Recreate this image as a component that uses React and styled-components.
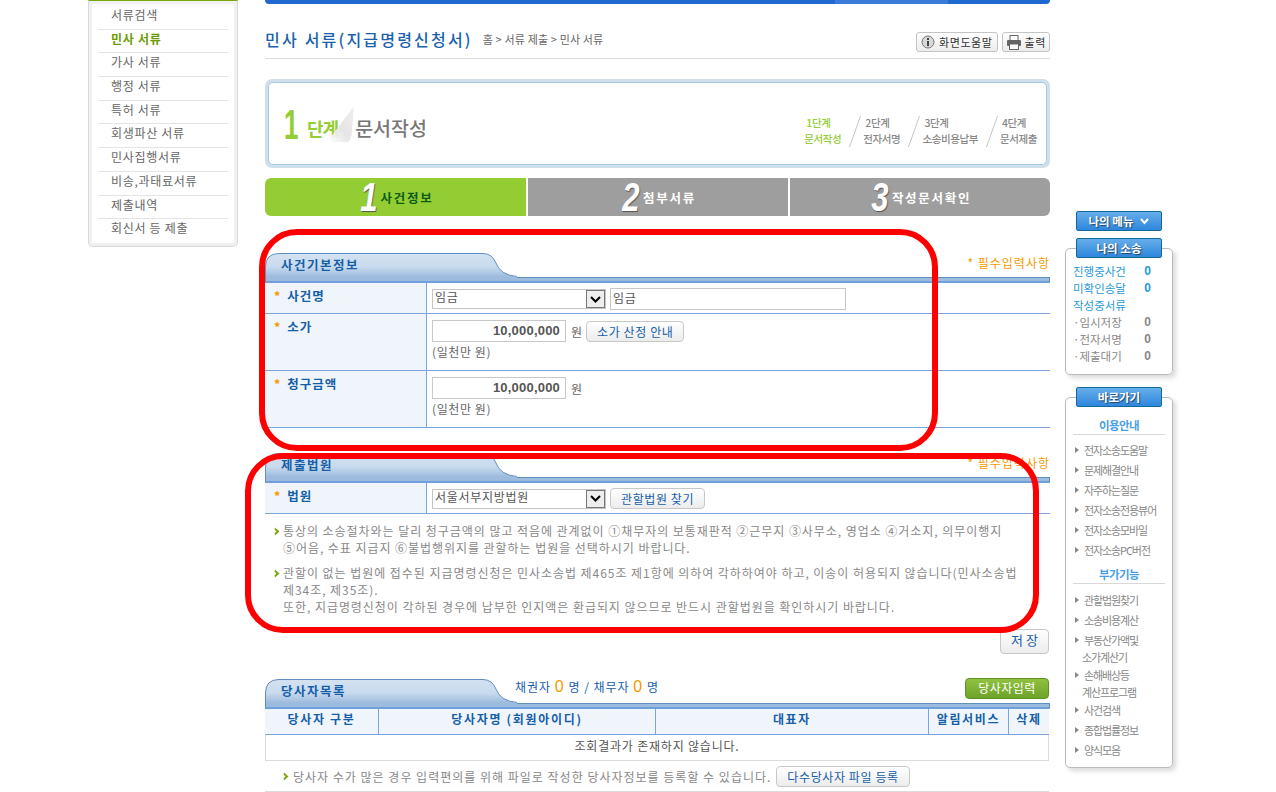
import styled, { createGlobalStyle } from "styled-components";

const GlobalStyle = createGlobalStyle`
  html, body {
    margin: 0;
    padding: 0;
    background: #fff;
    overflow: hidden;
  }
  body {
    font-family: "Noto Sans CJK KR", "Noto Sans", sans-serif;
    font-size: 12px;
    color: #666;
  }
  * { box-sizing: border-box; }
`;

const sideMenu = [
  "서류검색",
  "민사 서류",
  "가사 서류",
  "행정 서류",
  "특허 서류",
  "회생파산 서류",
  "민사집행서류",
  "비송,과태료서류",
  "제출내역",
  "회신서 등 제출",
];

const stepList = [
  ["1단계", "문서작성", true],
  ["2단계", "전자서명"],
  ["3단계", "소송비용납부"],
  ["4단계", "문서제출"],
];

const guideLinks = ["전자소송도움말", "문제해결안내", "자주하는질문", "전자소송전용뷰어", "전자소송모바일", "전자소송PC버전"];
const extraLinks = [
  ["관할법원찾기"],
  ["소송비용계산"],
  ["부동산가액및", "소가계산기"],
  ["손해배상등", "계산프로그램"],
  ["사건검색"],
  ["종합법률정보"],
  ["양식모음"],
];

const Arrow = () => (
  <ArrowIcon width="7" height="9" viewBox="0 0 7 9">
    <path d="M1 0.5 L5.5 4.5 L1 8.5 L0.5 6.5 L2.5 4.5 L0.5 2.5 Z" fill="#7fa60c" />
  </ArrowIcon>
);

const SelectChevron = () => (
  <SelectArrow>
    <svg width="11" height="7" viewBox="0 0 11 7">
      <path d="M1 1 L5.5 5.5 L10 1" fill="none" stroke="#000" strokeWidth="2" />
    </svg>
  </SelectArrow>
);

const SectionTab = ({ children }) => (
  <TabWrap>
    <TabShape width="252" height="25" viewBox="0 0 252 25">
      <defs>
        <linearGradient id="tabFill" x1="0" y1="0" x2="0" y2="1">
          <stop offset="0" stopColor="#d3e2f1" />
          <stop offset="0.55" stopColor="#c8daed" />
          <stop offset="0.95" stopColor="#9dbbdd" />
        </linearGradient>
      </defs>
      <path d="M0.5 25 V14 Q0.5 0.5 14 0.5 H218 Q227 0.5 231 10 Q235 22 252 23.5 V25 Z" fill="url(#tabFill)" />
      <path d="M0.5 25 V14 Q0.5 0.5 14 0.5 H218 Q227 0.5 231 10 Q235 22 252 23.5" fill="none" stroke="#5f8fbf" />
    </TabShape>
    <TabLabel>{children}</TabLabel>
  </TabWrap>
);

const App = () => {
  return (
    <Page>
      <GlobalStyle />
      <SideMenu>
        {sideMenu.map((item, i) => (
          <SideItem key={item} $active={i === 1}>
            {item}
          </SideItem>
        ))}
      </SideMenu>

      <Main>
        <TopBar />
        <TitleRow>
          <Title>민사 서류(지급명령신청서)</Title>
          <Crumbs>홈 &gt; 서류 제출 &gt; 민사 서류</Crumbs>
          <TitleTools>
            <ToolButton>
              <svg width="14" height="14" viewBox="0 0 14 14">
                <circle cx="7" cy="7" r="6" fill="#d8d8d8" stroke="#777" />
                <rect x="6" y="6" width="2" height="5" fill="#444" />
                <rect x="6" y="3" width="2" height="2" fill="#444" />
              </svg>
              화면도움말
            </ToolButton>
            <ToolButton $compact>
              <svg width="16" height="15" viewBox="0 0 16 15">
                <rect x="4" y="0.5" width="8" height="5" fill="#fff" stroke="#666" />
                <rect x="1" y="5" width="14" height="6" rx="1" fill="#666" />
                <rect x="3.5" y="9" width="9" height="5.5" fill="#fff" stroke="#666" />
              </svg>
              출력
            </ToolButton>
          </TitleTools>
        </TitleRow>

        <StepBox>
          <StepInner>
            <StepHead>
              <StepNum>1</StepNum>
              <StepWord>단계</StepWord>
              <FoldIcon width="27" height="36" viewBox="0 0 27 36">
                <defs>
                  <linearGradient id="fold" x1="0" y1="1" x2="1" y2="0">
                    <stop offset="0" stopColor="#fff" stopOpacity="0.9" />
                    <stop offset="0.45" stopColor="#e4e4e4" stopOpacity="0.95" />
                    <stop offset="1" stopColor="#efefef" />
                  </linearGradient>
                </defs>
                <path d="M27 0 L0 36 H20 Q24 36 25 25 Z" fill="url(#fold)" />
              </FoldIcon>
              <StepTitle>문서작성</StepTitle>
            </StepHead>
            <StepItems>
              {stepList.map(([a, b, on], i) => (
                <StepItem key={a}>
                  {i > 0 && (
                    <svg width="12" height="31" viewBox="0 0 12 31">
                      <line x1="11.5" y1="0" x2="0.5" y2="31" stroke="#c4c4c4" />
                    </svg>
                  )}
                  <StepText $on={on}>
                    <span>{a}</span>
                    <span>{b}</span>
                  </StepText>
                </StepItem>
              ))}
            </StepItems>
          </StepInner>
        </StepBox>

        <Tabs>
          <TabItem $active $first>
            <TabNum>1</TabNum>
            <TabText $dark>사건정보</TabText>
          </TabItem>
          <TabItem>
            <TabNum>2</TabNum>
            <TabText>첨부서류</TabText>
          </TabItem>
          <TabItem $last>
            <TabNum>3</TabNum>
            <TabText>작성문서확인</TabText>
          </TabItem>
        </Tabs>

        <SectionHead $top={37}>
          <SectionTop>
            <SectionTab>사건기본정보</SectionTab>
            <Required>* 필수입력사항</Required>
          </SectionTop>
          <HeadBar />
        </SectionHead>
        <FormRow $height={31}>
          <RowLabel><Star>*</Star>사건명</RowLabel>
          <RowBody $pad={5}>
            <InlineRow>
              <SelectBox $width={174}>
                임금
                <SelectChevron />
              </SelectBox>
              <TextField $width={236} readOnly value="임금" />
            </InlineRow>
          </RowBody>
        </FormRow>
        <FormRow $height={57}>
          <RowLabel><Star>*</Star>소가</RowLabel>
          <RowBody $pad={6}>
            <InlineRow>
              <AmountField readOnly value="10,000,000" />
              <Unit>원</Unit>
              <SmallButton>소가 산정 안내</SmallButton>
            </InlineRow>
            <Hint>(일천만 원)</Hint>
          </RowBody>
        </FormRow>
        <FormRow $height={57}>
          <RowLabel><Star>*</Star>청구금액</RowLabel>
          <RowBody $pad={6}>
            <InlineRow>
              <AmountField readOnly value="10,000,000" />
              <Unit>원</Unit>
            </InlineRow>
            <Hint>(일천만 원)</Hint>
          </RowBody>
        </FormRow>

        <SectionHead $top={25}>
          <SectionTop>
            <SectionTab>제출법원</SectionTab>
            <Required>* 필수입력사항</Required>
          </SectionTop>
          <HeadBar />
        </SectionHead>
        <FormRow $height={31}>
          <RowLabel><Star>*</Star>법원</RowLabel>
          <RowBody $pad={5}>
            <InlineRow>
              <SelectBox $width={174}>
                서울서부지방법원
                <SelectChevron />
              </SelectBox>
              <SmallButton>관할법원 찾기</SmallButton>
            </InlineRow>
          </RowBody>
        </FormRow>
        <Notes>
          <Note>
            <Arrow />
            <p>
              통상의 소송절차와는 달리 청구금액의 많고 적음에 관계없이 ①채무자의 보통재판적 ②근무지 ③사무소, 영업소 ④거소지, 의무이행지
              <br />
              ⑤어음, 수표 지급지 ⑥불법행위지를 관할하는 법원을 선택하시기 바랍니다.
            </p>
          </Note>
          <Note>
            <Arrow />
            <p>
              관할이 없는 법원에 접수된 지급명령신청은 민사소송법 제465조 제1항에 의하여 각하하여야 하고, 이송이 허용되지 않습니다(민사소송법
              <br />
              제34조, 제35조).
              <br />
              또한, 지급명령신청이 각하된 경우에 납부한 인지액은 환급되지 않으므로 반드시 관할법원을 확인하시기 바랍니다.
            </p>
          </Note>
        </Notes>
        <SaveRow>
          <SaveButton>저 장</SaveButton>
        </SaveRow>

        <SectionHead $top={25}>
          <SectionTop>
            <SectionTab>당사자목록</SectionTab>
            <PartyCount>
              채권자 <b>0</b> 명 / 채무자 <b>0</b> 명
            </PartyCount>
            <GreenButton>당사자입력</GreenButton>
          </SectionTop>
          <HeadBar />
        </SectionHead>
        <PartyHead>
          <span>당사자 구분</span>
          <span>당사자명 (회원아이디)</span>
          <span>대표자</span>
          <span>알림서비스</span>
          <span>삭제</span>
        </PartyHead>
        <EmptyRow>조회결과가 존재하지 않습니다.</EmptyRow>
        <BulkRow>
          <Arrow />
          <span>당사자 수가 많은 경우 입력편의를 위해 파일로 작성한 당사자정보를 등록할 수 있습니다.</span>
          <SmallButton>다수당사자 파일 등록</SmallButton>
        </BulkRow>

        <Ring $left={-6} $top={229} $width={679} $height={222} />
        <Ring $left={-20} $top={453} $width={794} $height={180} />
      </Main>

      <RightRail>
        <RailButton>
          나의 메뉴
          <svg width="9" height="7" viewBox="0 0 9 7">
            <path d="M1 1 L4.5 5 L8 1" fill="none" stroke="#fff" strokeWidth="2" />
          </svg>
        </RailButton>
        <RailBox $top={17}>
          <RailCap>나의 소송</RailCap>
          <CaseList>
            <CaseRow $blue><span>진행중사건</span><b>0</b></CaseRow>
            <CaseRow $blue><span>미확인송달</span><b>0</b></CaseRow>
            <CaseRow $blue><span>작성중서류</span></CaseRow>
            <CaseRow><span>·임시저장</span><b>0</b></CaseRow>
            <CaseRow><span>·전자서명</span><b>0</b></CaseRow>
            <CaseRow><span>·제출대기</span><b>0</b></CaseRow>
          </CaseList>
        </RailBox>
        <RailBox $top={22}>
          <RailCap>바로가기</RailCap>
          <RailHeading $top={8} $below={5}>이용안내</RailHeading>
          {guideLinks.map((l) => (
            <RailLink key={l}>{l}</RailLink>
          ))}
          <RailHeading $top={4} $below={6}>부가기능</RailHeading>
          {extraLinks.map((l) => (
            <RailLink key={l[0]} $double={l.length > 1}>
              {l[0]}
              {l[1] && <RailLinkSecond>{l[1]}</RailLinkSecond>}
            </RailLink>
          ))}
        </RailBox>
      </RightRail>
    </Page>
  );
};

const Page = styled.div`
  display: flex;
  align-items: flex-start;
  width: 1276px;
  height: 792px;
  padding-left: 88px;
  overflow: hidden;
`;

const SideMenu = styled.div`
  width: 150px;
  height: 247px;
  flex: none;
  padding: 5px 9px 5px;
  border: 1px solid #d8d8d8;
  border-top: 1px solid #7aa80c;
  border-radius: 0 0 5px 5px;
  box-shadow: inset 0 0 0 3px #f0f0f0;
`;

const SideItem = styled.div`
  height: 23.7px;
  line-height: 18px;
  padding-left: 13px;
  border-bottom: 1px solid #e4e4e4;
  color: ${(p) => (p.$active ? "#6a9c00" : "#666")};
  font-weight: ${(p) => (p.$active ? 700 : 400)};
  letter-spacing: 0.7px;

  &:last-child {
    border-bottom: none;
  }
`;

const Main = styled.div`
  position: relative;
  width: 785px;
  flex: none;
  margin-left: 27px;
`;

const TopBar = styled.div`
  height: 4px;
  background: linear-gradient(90deg, #1f68d0 570px, #3a7ad8 570px, #3a7ad8 683px, #1f68d0 683px);
  border-radius: 0 0 4px 4px;
`;

const TitleRow = styled.div`
  display: flex;
  align-items: center;
  height: 55px;
  padding-top: 16px;
  border-bottom: 1px solid #dcdcdc;
`;

const Title = styled.h1`
  margin: 0;
  font-size: 16px;
  font-weight: 500;
  color: #1a62ae;
  letter-spacing: 2.2px;
`;

const Crumbs = styled.span`
  margin-left: 10px;
  font-size: 11px;
  letter-spacing: 0.15px;
  color: #666;
`;

const TitleTools = styled.div`
  margin-left: auto;
  margin-top: 6px;
  display: flex;
  gap: 4px;
`;

const ToolButton = styled.div`
  display: flex;
  align-items: center;
  gap: ${(p) => (p.$compact ? 3 : 4)}px;
  height: 20px;
  padding: 0 ${(p) => (p.$compact ? 3 : 4)}px;
  border: 1px solid #c4c4c4;
  border-radius: 3px;
  background: linear-gradient(#fff, #ececec);
  color: #333;
  font-size: 11px;
  letter-spacing: 0.6px;
`;

const StepBox = styled.div`
  margin-top: 20px;
  height: 89px;
  padding: 3px;
  background: #cfe0ec;
  border-radius: 7px;
`;

const StepInner = styled.div`
  display: flex;
  align-items: center;
  justify-content: space-between;
  height: 100%;
  padding: 0 9px 0 15px;
  background: #fff;
  border: 1px solid #a3cbe6;
  border-radius: 5px;
`;

const StepHead = styled.div`
  display: flex;
  align-items: center;
  margin-top: 2px;
`;

const StepNum = styled.span`
  display: inline-block;
  font-family: "Liberation Sans", sans-serif;
  font-size: 42px;
  font-weight: 700;
  line-height: 40px;
  color: #93cd34;
  margin-right: 4px;
  width: 19px;
  transform: scaleX(0.62);
  transform-origin: left center;
`;

const StepWord = styled.span`
  font-size: 18px;
  font-weight: 700;
  color: #93cd34;
  margin-top: 6px;
  letter-spacing: -1px;
`;

const FoldIcon = styled.svg`
  margin-left: -11px;
  margin-top: -2px;
`;

const StepTitle = styled.span`
  font-size: 19.5px;
  font-weight: 500;
  color: #777;
  margin-top: 6px;
  margin-left: 1px;
  letter-spacing: 0;
`;

const StepItems = styled.div`
  display: flex;
  align-items: flex-end;
  gap: 8px;
  margin-top: 15px;
`;

const StepItem = styled.div`
  display: flex;
  align-items: center;
  gap: 2px;
`;

const StepText = styled.div`
  display: flex;
  flex-direction: column;
  font-size: 10.5px;
  font-weight: 500;
  line-height: 16px;
  letter-spacing: -0.4px;
  color: ${(p) => (p.$on ? "#93cd34" : "#888")};

  span:first-child {
    padding-left: 2px;
  }
`;

const Tabs = styled.div`
  display: grid;
  grid-template-columns: 261px 260px 260px;
  gap: 2px;
  margin-top: 10px;
`;

const TabItem = styled.div`
  display: flex;
  align-items: center;
  justify-content: center;
  gap: 3px;
  height: 38px;
  background: ${(p) => (p.$active ? "#94cd33" : "#9e9e9e")};
  border-radius: ${(p) => (p.$first ? "6px 0 0 6px" : p.$last ? "0 6px 6px 0" : "0")};
`;

const TabNum = styled.span`
  display: inline-block;
  width: 20px;
  text-align: center;
  font-family: "Liberation Sans", sans-serif;
  font-size: 40px;
  line-height: 38px;
  font-weight: 700;
  font-style: italic;
  color: #fff;
  text-shadow: 1px 1px 1px #555;
  transform: scaleX(0.78);
`;

const TabText = styled.span`
  font-size: 12.5px;
  font-weight: 700;
  letter-spacing: 1.7px;
  color: ${(p) => (p.$dark ? "#0d5c16" : "#fff")};
`;

const SectionHead = styled.div`
  margin-top: ${(p) => p.$top}px;
`;

const SectionTop = styled.div`
  display: flex;
  align-items: flex-start;
  height: 24px;
`;

const TabWrap = styled.div`
  position: relative;
  z-index: 1;
  width: 250px;
  height: 24px;
  flex: none;
`;

const TabShape = styled.svg`
  display: block;
  overflow: visible;
`;

const TabLabel = styled.span`
  position: absolute;
  left: 16px;
  top: 2px;
  font-size: 12.5px;
  font-weight: 700;
  color: #155ea8;
  letter-spacing: 1.5px;
`;

const Required = styled.span`
  margin-left: auto;
  margin-top: 1px;
  color: #f59a00;
  font-size: 12px;
  line-height: 18px;
  letter-spacing: 1px;
`;

const HeadBar = styled.div`
  height: 6px;
  background: #9dbbdd;
  border: 1px solid #5f8fbf;
  border-bottom: 2px solid #6f9fdc;
`;

const FormRow = styled.div`
  display: grid;
  grid-template-columns: 162px 1fr;
  height: ${(p) => p.$height}px;
  border-bottom: 1px solid #7aa5de;
`;

const RowLabel = styled.div`
  display: flex;
  align-items: flex-start;
  padding: 3px 0 0 9px;
  background: #f0f5fc;
  border-right: 1px solid #7aa5de;
  color: #155ea8;
  font-size: 12.5px;
  font-weight: 700;
  letter-spacing: 1px;
`;

const Star = styled.span`
  color: #f59a00;
  margin-right: 6px;
`;

const RowBody = styled.div`
  display: flex;
  flex-direction: column;
  padding: ${(p) => p.$pad}px 0 0 5px;
`;

const InlineRow = styled.div`
  display: flex;
  align-items: center;
  gap: 4px;
`;

const SelectBox = styled.div`
  display: flex;
  align-items: flex-start;
  justify-content: space-between;
  width: ${(p) => p.$width}px;
  height: 20px;
  padding-left: 2px;
  border: 1px solid #c4c4c4;
  line-height: 14px;
  color: #555;
  letter-spacing: 0.7px;
`;

const SelectArrow = styled.div`
  display: flex;
  align-items: center;
  justify-content: center;
  width: 19px;
  height: 18px;
  background: #eee;
  border: 1px solid #777;
`;

const TextField = styled.input`
  width: ${(p) => p.$width}px;
  height: 22px;
  padding: 0 2px 4px;
  border: 1px solid #c8c8c8;
  color: #555;
  font: inherit;
  letter-spacing: 0.7px;
  outline: none;
`;

const AmountField = styled.input`
  width: 134px;
  height: 22px;
  padding: 0 5px 1px 3px;
  border: 1px solid #c8c8c8;
  color: #555;
  font-family: "Liberation Sans", sans-serif;
  font-size: 13px;
  font-weight: 700;
  letter-spacing: 0.2px;
  text-align: right;
  outline: none;
`;

const Unit = styled.span`
  margin-left: 1px;
`;

const SmallButton = styled.div`
  display: flex;
  align-items: center;
  height: 21px;
  padding: 0 10px;
  border: 1px solid #c8c8c8;
  border-radius: 4px;
  background: linear-gradient(#fff, #ececec);
  color: #155ea8;
  letter-spacing: 0.6px;
  white-space: nowrap;
`;

const Hint = styled.div`
  margin-top: 1px;
  line-height: 18px;
  letter-spacing: 0.6px;
`;

const Notes = styled.div`
  padding: 8px 0 0 9px;
  height: 115px;
`;

const Note = styled.div`
  display: flex;
  align-items: flex-start;
  gap: 2px;
  margin-bottom: 8px;
  color: #888;
  letter-spacing: 0.95px;

  p {
    margin: 0;
    line-height: 17px;
  }
`;

const ArrowIcon = styled.svg`
  flex: none;
  margin-top: 5px;
`;

const SaveRow = styled.div`
  display: flex;
  justify-content: flex-end;
  padding-right: 1px;
`;

const SaveButton = styled.div`
  width: 49px;
  height: 25px;
  line-height: 19px;
  text-align: center;
  border: 1px solid #c8c8c8;
  border-radius: 4px;
  background: linear-gradient(#fff, #ececec);
  color: #155ea8;
  font-size: 13px;
`;

const PartyCount = styled.span`
  margin-top: -1px;
  color: #155ea8;
  letter-spacing: 1px;

  b {
    color: #f59a00;
    font-family: "Liberation Sans", sans-serif;
    font-size: 16px;
    font-weight: 400;
  }
`;

const GreenButton = styled.div`
  margin-left: auto;
  margin-right: 1px;
  margin-top: -1px;
  width: 84px;
  height: 21px;
  line-height: 18px;
  text-align: center;
  color: #fff;
  letter-spacing: 0.5px;
  background: linear-gradient(#90c13f, #6ea22a);
  border: 1px solid #5f9222;
  border-radius: 4px;
`;

const PartyHead = styled.div`
  display: grid;
  grid-template-columns: 113px 277px 273px 80px 41px;
  width: 784px;
  height: 26px;
  background: #f0f5fc;
  border-bottom: 1px solid #7aa5de;
  color: #155ea8;
  font-weight: 700;
  letter-spacing: 1.7px;
  text-align: center;
  line-height: 20px;

  span + span {
    border-left: 1px solid #7aa5de;
  }
`;

const EmptyRow = styled.div`
  width: 784px;
  height: 26px;
  line-height: 21px;
  text-align: center;
  color: #555;
  letter-spacing: 0.8px;
  border: 1px solid #dcdcdc;
  border-top: none;
`;

const BulkRow = styled.div`
  display: flex;
  align-items: center;
  gap: 3px;
  width: 784px;
  height: 31px;
  padding-left: 18px;
  color: #888;
  letter-spacing: 1px;
  border-bottom: 1px solid #dcdcdc;

  ${ArrowIcon} {
    margin-top: 0;
  }

  ${SmallButton} {
    margin-left: 2px;
    letter-spacing: 0.6px;
  }
`;

const Ring = styled.div`
  position: absolute;
  left: ${(p) => p.$left}px;
  top: ${(p) => p.$top}px;
  width: ${(p) => p.$width}px;
  height: ${(p) => p.$height}px;
  border: 6px solid #ff0000;
  border-radius: 38px;
  pointer-events: none;
  z-index: 2;
`;

const RightRail = styled.div`
  width: 108px;
  flex: none;
  margin-left: 15px;
  padding-top: 211px;
`;

const RailButton = styled.div`
  display: flex;
  align-items: center;
  justify-content: center;
  gap: 7px;
  width: 86px;
  height: 20px;
  margin-left: 11px;
  background: linear-gradient(#67aeea, #2e86dc);
  border: 1px solid #106a9c;
  border-radius: 2px;
  color: #fff;
  font-size: 11.5px;
  font-weight: 700;
  text-shadow: 1px 1px 1px #246;
`;

const RailBox = styled.div`
  margin-top: ${(p) => p.$top}px;
  padding: 0 7px 7px;
  border: 1px solid #bbb;
  border-radius: 5px;
  box-shadow: 3px 3px 5px rgba(0, 0, 0, 0.15);
`;

const RailCap = styled(RailButton)`
  margin: -11px 0 0 3px;
`;

const CaseList = styled.div`
  padding: 5px 0 2px;
`;

const CaseRow = styled.div`
  display: flex;
  justify-content: space-between;
  height: 17px;
  line-height: 17px;
  font-size: 11.5px;
  color: ${(p) => (p.$blue ? "#2a98d8" : "#888")};
  padding-right: 14px;

  b {
    font-family: "Liberation Sans", sans-serif;
    font-size: 12px;
  }
`;

const RailHeading = styled.div`
  margin-top: ${(p) => p.$top}px;
  margin-bottom: ${(p) => p.$below}px;
  height: 20px;
  line-height: 20px;
  text-align: center;
  border-bottom: 1px solid #d8d8d8;
  color: #4a9fe8;
  font-size: 11.5px;
  font-weight: 700;
  letter-spacing: -0.6px;
`;

const RailLink = styled.div`
  position: relative;
  padding-left: 11px;
  height: ${(p) => (p.$double ? 35 : 20)}px;
  line-height: 20px;
  font-size: 11px;
  letter-spacing: -1.1px;
  color: #888;
  white-space: nowrap;

  &::before {
    content: "";
    position: absolute;
    left: 2px;
    top: 7px;
    border-left: 4px solid #888;
    border-top: 3px solid transparent;
    border-bottom: 3px solid transparent;
  }
`;

const RailLinkSecond = styled.div`
  line-height: 15px;
  margin-left: -2px;
`;

export default App;
